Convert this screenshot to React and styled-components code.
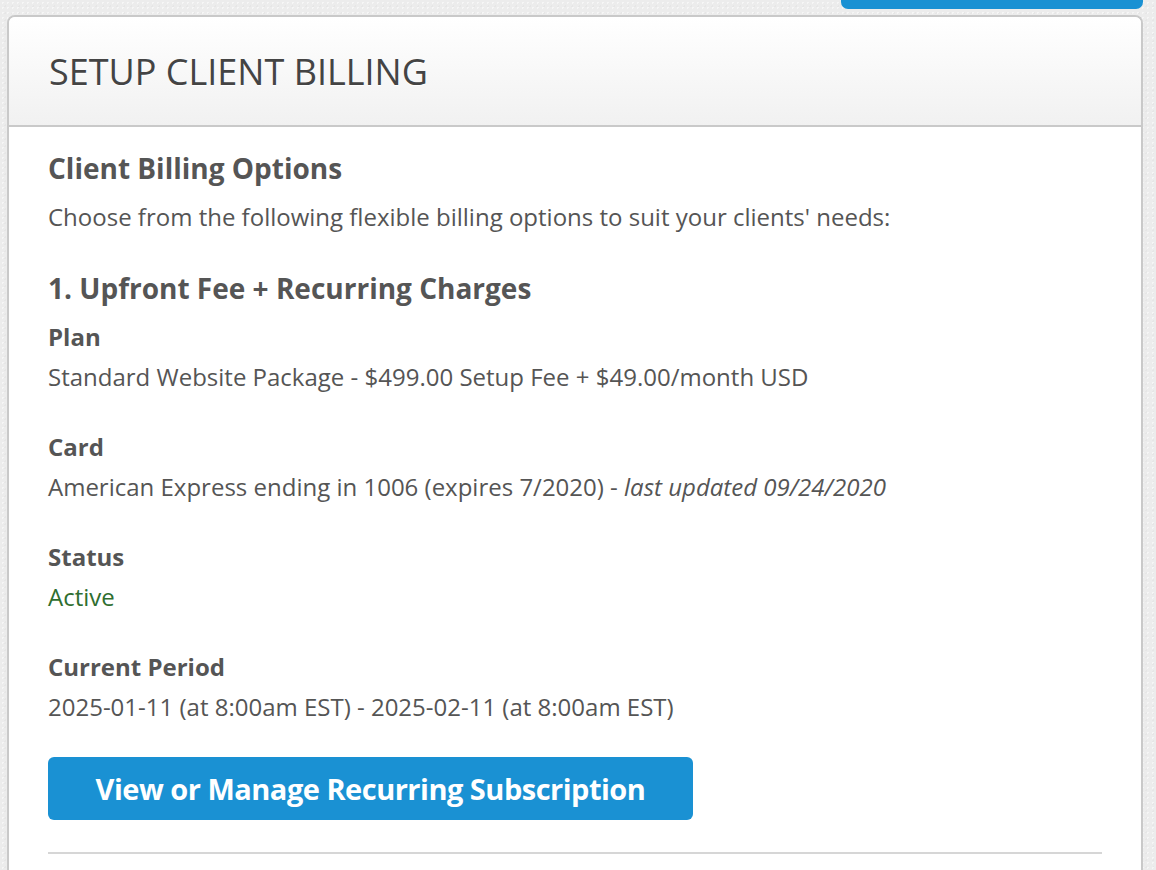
import React from 'react'
import styled, { createGlobalStyle } from 'styled-components'

const GlobalStyle = createGlobalStyle`
  html, body {
    margin: 0;
    padding: 0;
  }
  body {
    background-color: #ececec;
    background-image:
      radial-gradient(rgba(255,255,255,0.55) 1px, transparent 1px),
      radial-gradient(rgba(0,0,0,0.025) 1px, transparent 1px);
    background-size: 5px 5px, 7px 7px;
    background-position: 0 0, 2px 3px;
    font-family: "Open Sans", "Liberation Sans", sans-serif;
    color: #555;
  }
`

const Page = styled.div`
  width: 1156px;
  height: 870px;
  overflow: hidden;
  position: relative;
`

const TopTab = styled.div`
  position: absolute;
  top: 0;
  left: 841px;
  width: 302px;
  height: 9px;
  background: #1a91d3;
  border-radius: 0 0 7px 7px;
`

const Wrap = styled.div`
  padding: 15px 13px 0 7px;
`

const Panel = styled.section`
  min-height: 920px;
  background: #fff;
  border: 2px solid #c9c9c9;
  border-bottom: none;
  border-radius: 8px 8px 0 0;
  overflow: hidden;
`

const PanelHeader = styled.header`
  height: 108px;
  display: flex;
  align-items: center;
  padding: 0 40px;
  background: linear-gradient(to bottom, #ffffff 0%, #f1f1f1 100%);
  border-bottom: 2px solid #c9c9c9;
`

const Title = styled.h1`
  margin: 0;
  font-size: 36px;
  font-weight: 400;
  color: #444;
  text-shadow: 0 1px 0 #fff;
`

const Body = styled.div`
  padding: 21px 39px 0 39px;
`

const Heading = styled.h2`
  margin: ${p => p.$top || 0}px 0 0;
  font-size: 28px;
  font-weight: 700;
  color: #555;
  line-height: 40px;
`

const Text = styled.p`
  margin: 12px 0 0;
  font-size: 24px;
  line-height: 34px;
  color: #555;
`

const Field = styled.div`
  margin-top: ${p => p.$first ? 12 : 36}px;
`

const Label = styled.div`
  font-size: 24px;
  font-weight: 700;
  color: #555;
  line-height: 34px;
`

const Value = styled.div`
  font-size: 24px;
  line-height: 34px;
  margin-top: 6px;
  color: ${p => p.$ok ? '#2f6e2f' : '#555'};

  em {
    font-style: italic;
  }
`

const Button = styled.button`
  display: block;
  margin-top: 33px;
  height: 63px;
  width: 645px;
  padding: 0;
  border: none;
  border-radius: 6px;
  background: #1a91d3;
  color: #fff;
  font-family: "Open Sans", "Liberation Sans", sans-serif;
  font-size: 29px;
  font-weight: 700;
  letter-spacing: -0.5px;
  cursor: pointer;
`

const Rule = styled.hr`
  margin: 32px 0 0;
  border: none;
  border-top: 2px solid #d6d6d6;
`

const fields = [
  { label: 'Plan', value: 'Standard Website Package - $499.00 Setup Fee + $49.00/month USD' },
  { label: 'Card', value: <>American Express ending in 1006 (expires 7/2020) - <em>last updated 09/24/2020</em></> },
  { label: 'Status', value: 'Active', ok: true },
  { label: 'Current Period', value: '2025-01-11 (at 8:00am EST) - 2025-02-11 (at 8:00am EST)' },
]

export default function App() {
  return (
    <Page>
      <GlobalStyle />
      <TopTab />
      <Wrap>
        <Panel>
          <PanelHeader>
            <Title>SETUP CLIENT BILLING</Title>
          </PanelHeader>
          <Body>
            <Heading>Client Billing Options</Heading>
            <Text>Choose from the following flexible billing options to suit your clients' needs:</Text>
            <Heading $top={34}>1. Upfront Fee + Recurring Charges</Heading>
            {fields.map((f, i) => (
              <Field key={f.label} $first={i === 0}>
                <Label>{f.label}</Label>
                <Value $ok={f.ok}>{f.value}</Value>
              </Field>
            ))}
            <Button>View or Manage Recurring Subscription</Button>
            <Rule />
          </Body>
        </Panel>
      </Wrap>
    </Page>
  )
}
